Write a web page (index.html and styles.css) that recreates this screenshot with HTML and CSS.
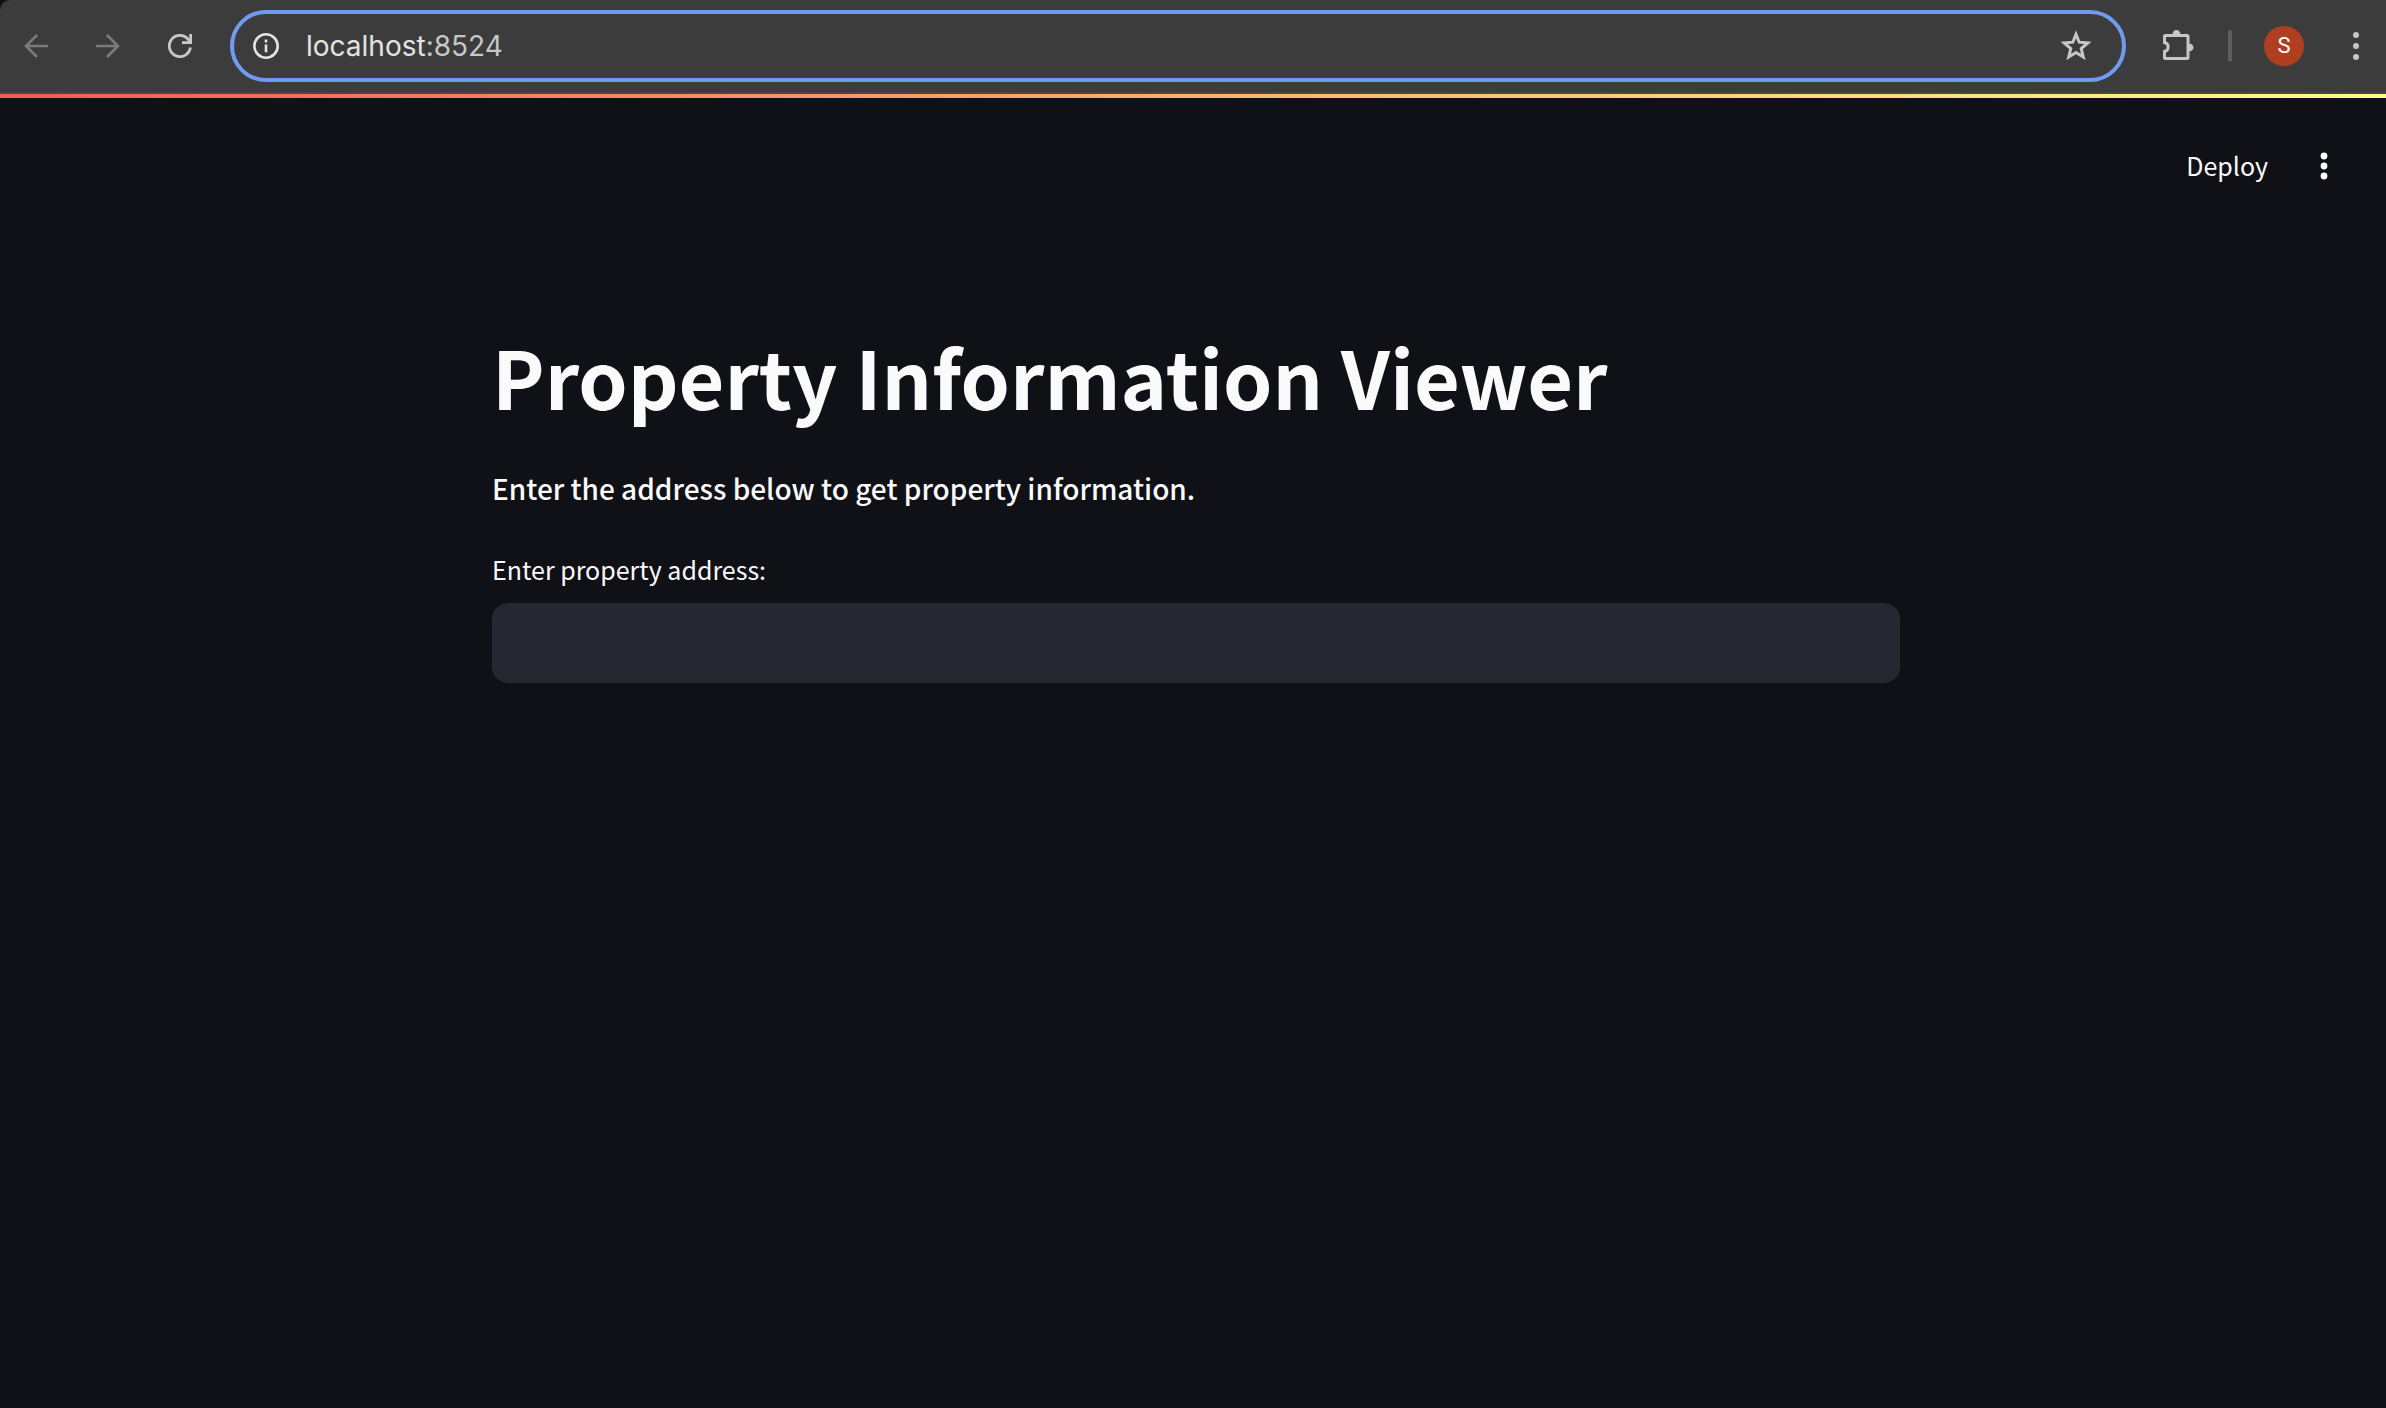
FILE: index.html
```html
<!DOCTYPE html>
<html lang="en">
<head>
<meta charset="utf-8">
<title>Property Information Viewer</title>
<link rel="stylesheet" href="styles.css">
</head>
<body>
<header class="toolbar">
  <nav class="nav" aria-label="Browser">
    <button class="icon-button dim" aria-label="Back">
      <svg width="24" height="24" viewBox="0 0 24 24" fill="none" stroke="currentColor" stroke-width="2.6"><path d="M24 12H2M13 1L2 12l11 11"/></svg>
    </button>
    <button class="icon-button dim" aria-label="Forward">
      <svg width="24" height="24" viewBox="0 0 24 24" fill="none" stroke="currentColor" stroke-width="2.6"><path d="M0 12h22M11 1l11 11-11 11"/></svg>
    </button>
    <button class="icon-button" aria-label="Reload">
      <svg width="24" height="24" viewBox="0 0 24 24" fill="none" stroke="currentColor" stroke-width="2.8"><path d="M22.4 13.5A10.600 10.600 0 1 1 19.500 4.600L22 7.500"/><path d="M22.600 0v8.600H14"/></svg>
    </button>
  </nav>
  <div class="omnibox">
    <svg width="26" height="26" viewBox="0 0 26 26" fill="none" stroke="currentColor" stroke-width="2.6"><circle cx="13" cy="13" r="11.7"/><path d="M13 11.600v7.600M13 6.600v2.800"/></svg>
    <a class="url" href="#"><span class="host">localhost</span>:8524</a>
    <button class="icon-button star" aria-label="Bookmark this page">
      <svg width="32" height="32" viewBox="0 0 32 32" fill="none" stroke="currentColor" stroke-width="3"><path d="M16 4.200l3.200 8 8.600.7-6.600 5.600 2.100 8.500-7.300-4.600L8.700 27l2.100-8.500-6.600-5.600 8.600-.7z"/></svg>
    </button>
  </div>
  <div class="actions">
    <button class="icon-button" aria-label="Extensions">
      <svg width="32" height="32" viewBox="0 0 32 32" fill="none" stroke="currentColor" stroke-width="3"><path d="M3.500 5.500h21.500a1 1 0 0 1 1 1v21a1 1 0 0 1-1 1H3.500a1 1 0 0 1-1-1v-6a4.600 4.600 0 0 0 0-9v-6a1 1 0 0 1 1-1z"/><path fill="currentColor" stroke="none" d="M10.500 4.500a4 4.500 0 0 1 8 0zM27 13.500a4.500 4 0 0 1 0 8z"/></svg>
    </button>
    <span class="divider"></span>
    <button class="avatar" aria-label="Profile">S</button>
    <button class="icon-button" aria-label="Browser menu">
      <svg width="8" height="28" viewBox="0 0 8 28" fill="currentColor"><circle cx="4" cy="3" r="3"/><circle cx="4" cy="14" r="3"/><circle cx="4" cy="25" r="3"/></svg>
    </button>
  </div>
</header>
<div class="decoration"></div>
<div class="app-bar">
  <button class="deploy">Deploy</button>
  <button class="icon-button app-menu" aria-label="Main menu">
    <svg width="8" height="28" viewBox="0 0 8 28" fill="currentColor"><circle cx="4" cy="4" r="3.400"/><circle cx="4" cy="14" r="3.400"/><circle cx="4" cy="24" r="3.400"/></svg>
  </button>
</div>
<div class="page">
  <main class="content">
    <h1>Property Information Viewer</h1>
    <p>Enter the address below to get property information.</p>
    <label for="address">Enter property address:</label>
    <input id="address" type="text">
  </main>
</div>
</body>
</html>
```
FILE: styles.css
```css
* { box-sizing: border-box; }

body {
  margin: 0;
  min-height: 100vh;
  background: #0f1116;
  color: #fafafa;
  font-family: "Noto Sans CJK SC", "Noto Sans", sans-serif;
}

button {
  margin: 0;
  padding: 0;
  border: 0;
  background: none;
  color: inherit;
  font: inherit;
}

svg { display: block; }

.toolbar {
  display: flex;
  align-items: center;
  height: 94px;
  padding: 0 26px 0 24px;
  background: #3c3c3c;
  border-bottom: 2px solid #474747;
  border-top-left-radius: 10px;
  color: #c7c7c7;
  font-family: Inter, sans-serif;
}

.nav {
  display: flex;
  gap: 48px;
  margin-right: 38px;
}

.dim { color: #7b7b7b; }

.omnibox {
  display: flex;
  flex: 1;
  align-items: center;
  height: 72px;
  padding: 0 30px 0 19px;
  border: 4px solid #709bf1;
  border-radius: 36px;
  color: #e3e3e3;
}

.url {
  flex: 1;
  margin-left: 27px;
  color: #c7c7c7;
  font-size: 28px;
  line-height: 36px;
  text-decoration: none;
}

.host { color: #e3e3e3; }

.star { color: #c7c7c7; }

.actions {
  display: flex;
  align-items: center;
  margin-left: 36px;
}

.divider {
  width: 4px;
  height: 32px;
  margin: 0 32px 0 34px;
  border-radius: 2px;
  background: #5e5e5e;
}

.avatar {
  width: 40px;
  height: 40px;
  margin-right: 48px;
  border-radius: 50%;
  background: #b03f20;
  color: #fff;
  font-family: Roboto, sans-serif;
  font-size: 22px;
  line-height: 40px;
}

.decoration {
  height: 4px;
  background: linear-gradient(90deg, #f25a52, #ffb06c 50%, #fffd8c);
}

.app-bar {
  display: flex;
  align-items: center;
  justify-content: flex-end;
  gap: 52px;
  height: 136px;
  padding-right: 58px;
}

.deploy {
  padding-bottom: 2px;
  font-size: 25px;
  line-height: 42px;
}

.page { padding-left: 6px; }

.content {
  width: 1408px;
  max-width: 100%;
  margin: 0 auto;
  padding-top: 89px;
}

h1 {
  margin: 0 0 33px;
  font-size: 79px;
  font-weight: 700;
  line-height: 106px;
}

p {
  margin: 0 0 34px;
  font-size: 28px;
  font-weight: 500;
  line-height: 52px;
}

label {
  display: block;
  margin-bottom: 13px;
  font-size: 25px;
  line-height: 42px;
}

input {
  display: block;
  width: 100%;
  height: 80px;
  padding: 0 24px;
  border: 2px solid #282930;
  border-radius: 16px;
  outline: 0;
  background: #262730;
  color: inherit;
  font: inherit;
  font-size: 28px;
}
```
